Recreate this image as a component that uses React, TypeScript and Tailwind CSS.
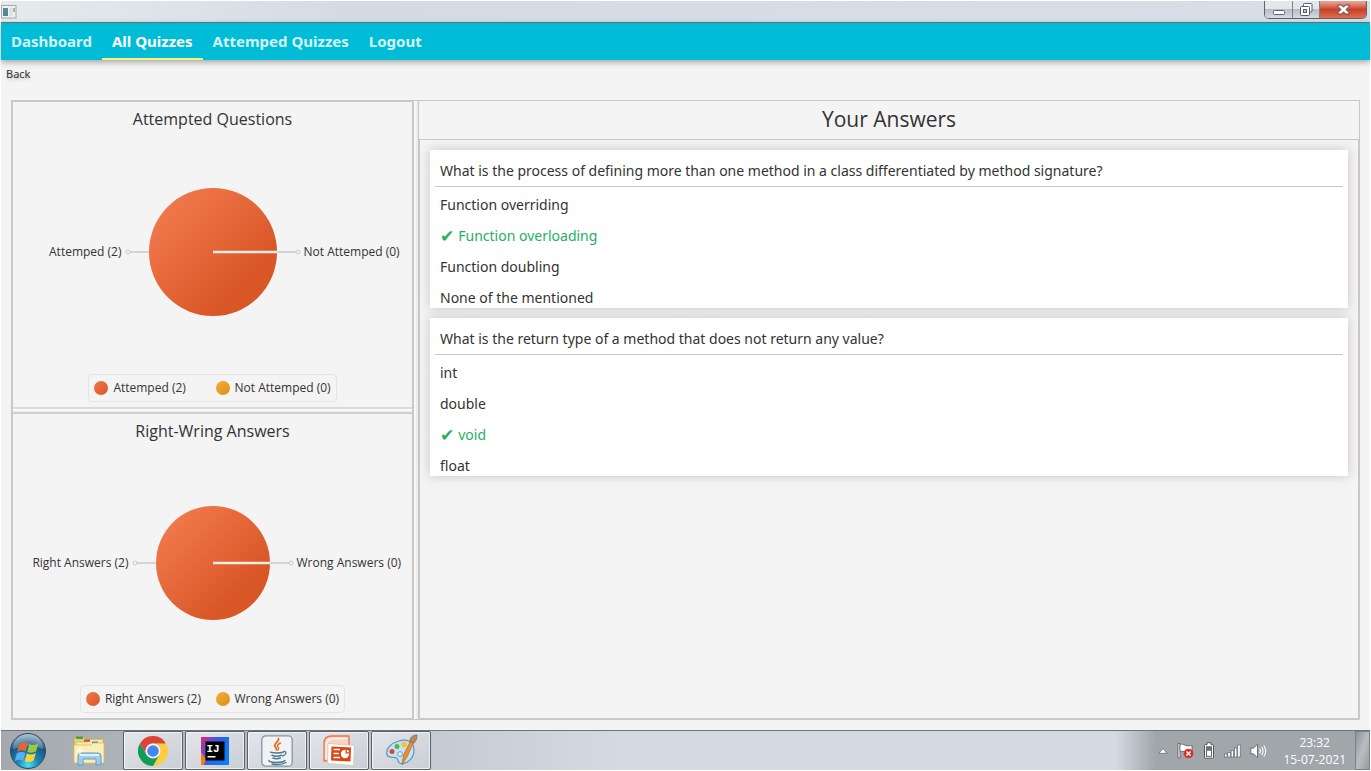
import React from "react";

type Slice = { label: string; value: number };
type Question = { text: string; options: string[]; correct: number };

const tabs = ["Dashboard", "All Quizzes", "Attemped Quizzes", "Logout"];

const questions: Question[] = [
  {
    text: "What is the process of defining more than one method in a class differentiated by method signature?",
    options: ["Function overriding", "Function overloading", "Function doubling", "None of the mentioned"],
    correct: 1,
  },
  {
    text: "What is the return type of a method that does not return any value?",
    options: ["int", "double", "void", "float"],
    correct: 2,
  },
];

function WindowBar() {
  return (
    <header className="flex h-[22px] items-start justify-between border-b border-[#70777c] bg-linear-to-r from-[#e5eaec] via-[#d5dbe4] via-25% to-[#d8dee6]">
      <svg className="mt-1 h-[14px] w-[16px]" viewBox="0 0 16 14" aria-hidden="true">
        <rect x="0.5" y="0.5" width="14.5" height="12.5" fill="#f0f1f1" stroke="#a4a8aa" />
        <rect x="2" y="3" width="5" height="8" fill="#4b8f8b" />
        <rect x="2" y="3" width="5" height="3" fill="#5d86a8" />
        <rect x="8.5" y="3" width="3" height="8" fill="#dcdedd" />
        <rect x="12" y="3" width="2" height="4" fill="#8dbcb9" />
      </svg>
      <div className="mr-[3px] flex h-[18px] overflow-hidden rounded-b-[5px] border border-t-0 border-[#5d646e]">
        <button aria-label="Minimize" className="flex w-[28px] items-center justify-center border-r border-[#7b818b] bg-linear-to-b from-[#e3e6ea] from-45% via-[#b8bdc6] via-50% to-[#d6dae0]">
          <svg className="h-[12px] w-[14px]" viewBox="0 0 14 12">
            <rect x="1.5" y="6.5" width="11" height="4" rx="1" fill="#fff" stroke="#5a6070" />
          </svg>
        </button>
        <button aria-label="Restore" className="flex w-[27px] items-center justify-center border-r border-[#7b818b] bg-linear-to-b from-[#e3e6ea] from-45% via-[#b8bdc6] via-50% to-[#d6dae0]">
          <svg className="h-[13px] w-[13px]" viewBox="0 0 13 13" stroke="#555b6b">
            <rect x="3.500" y="0.5" width="8.500" height="8.500" rx="1" fill="#fff" />
            <rect x="0.5" y="3.500" width="9" height="9" rx="1" fill="#fff" />
            <rect x="3.500" y="6.500" width="3" height="3" fill="#c5c9d1" />
          </svg>
        </button>
        <button aria-label="Close" className="flex w-[46px] items-center justify-center bg-linear-to-b from-[#e5a292] from-5% via-[#c8402a] via-50% to-[#de6e4d]">
          <svg className="h-[11px] w-[13px]" viewBox="0 0 13 11">
            <path d="M1 1h3.500l2 2.200L8.500 1H12v1.500L9 5.500l3 3V10H8.500l-2-2.200-2 2.200H1V8.500l3-3-3-3z" fill="#fff" stroke="#5b4650" />
          </svg>
        </button>
      </div>
    </header>
  );
}

function PieChart({ title, slices, radius }: { title: string; slices: [Slice, Slice]; radius: number }) {
  const width = radius * 2 + 48;
  const height = radius * 2 + 2;
  const cx = width / 2;
  const cy = height / 2;
  const id = "pie-" + radius;
  const caption = (s: Slice) => s.label + " (" + s.value + ")";
  return (
    <section className="flex flex-1 flex-col items-center pb-[5px]">
      <h2 className="pt-[6px] text-[16px] leading-[22px]">{title}</h2>
      <div className="grid w-full flex-1 grid-cols-[1fr_auto_1fr] items-center gap-[3px] text-[12px] leading-4 whitespace-nowrap">
        <span className="text-right">{caption(slices[0])}</span>
        <svg width={width} height={height} viewBox={`0 0 ${width} ${height}`} role="img" aria-label={title}>
          <defs>
            <linearGradient id={id} x1="0.1" y1="0.1" x2="0.75" y2="0.75">
              <stop offset="0" stopColor="#f27a4e" />
              <stop offset="1" stopColor="#d95626" />
            </linearGradient>
          </defs>
          <g stroke="#c9c9c9" fill="none">
            <circle cx="3" cy={cy} r="2" />
            <path d={`M5 ${cy}H${cx - radius}M${cx + radius} ${cy}H${width - 5}`} strokeWidth="1.5" />
            <circle cx={width - 3} cy={cy} r="2" />
          </g>
          <circle cx={cx} cy={cy} r={radius} fill={`url(#${id})`} />
          <path d={`M${cx} ${cy}h${radius}`} stroke="#f8ece6" strokeWidth="2.500" />
        </svg>
        <span>{caption(slices[1])}</span>
      </div>
      <ul className="grid grid-cols-2 gap-[6px] rounded-[4px] border border-[#e4e4e4] px-[5px] py-[5px] text-[12px] leading-4">
        {slices.map((s, i) => (
          <li key={s.label} className="flex items-center gap-[5px] whitespace-nowrap">
            <span
              className={
                i === 0
                  ? "size-[14px] rounded-full bg-linear-to-br from-[#f0784d] to-[#d95626]"
                  : "size-[14px] rounded-full bg-linear-to-br from-[#f3ae3a] to-[#dd8f10]"
              }
            />
            {caption(s)}
          </li>
        ))}
      </ul>
    </section>
  );
}

function QuestionCard({ question }: { question: Question }) {
  return (
    <article className="bg-white px-[5px] shadow-[0_0_10px_rgba(90,70,75,0.27)]">
      <h3 className="border-b border-[#c8c8c8] px-[5px] pt-[11px] pb-[5px] leading-5">{question.text}</h3>
      <ul className="flex flex-col gap-[11px] px-[5px] pt-2">
        {question.options.map((o, i) => (
          <li key={o} className={i === question.correct ? "flex gap-[4px] leading-5 text-[#27ae60]" : "leading-5"}>
            {i === question.correct && <span className="font-['DejaVu_Sans',sans-serif] text-[17px]">✔</span>}
            {o}
          </li>
        ))}
      </ul>
    </article>
  );
}

function StartOrb() {
  return (
    <svg className="size-[38px]" viewBox="0 0 38 38" aria-hidden="true">
      <defs>
        <radialGradient id="orb" cx="0.5" cy="0.9" r="0.85">
          <stop offset="0" stopColor="#4fe0f5" />
          <stop offset="0.35" stopColor="#1789b8" />
          <stop offset="0.75" stopColor="#1c527e" />
          <stop offset="1" stopColor="#7fa3bd" />
        </radialGradient>
      </defs>
      <circle cx="19" cy="19" r="17.500" fill="url(#orb)" stroke="#2d4a60" />
      <path d="M4 17a15 15 0 0 1 30 0c-9-5-20-3-30 0z" fill="#fff" opacity="0.28" />
      <g transform="translate(-1.500 -1.500) scale(1.120)">
        <path d="M10.500 12.500c2.500-2 5.500-2 7.500-.8l-1.800 6.800c-2.200-1.200-4.700-1.200-7.400.5z" fill="#ef6327" />
        <path d="M19.500 12.200c2.500 1.300 5.300 1.100 8-.7l-1.900 7c-2.600 1.600-5.400 1.700-7.900.5z" fill="#9bcb3c" />
        <path d="M8.300 20.500c2.600-1.700 5.200-1.700 7.500-.5l-1.900 6.900c-2.300-1.200-4.800-1.100-7.400.5z" fill="#57b0f0" />
        <path d="M17.300 20.500c2.500 1.300 5.300 1.100 8-.5l-1.900 6.800c-2.600 1.600-5.400 1.800-8 .6z" fill="#fbd233" />
      </g>
    </svg>
  );
}

function FolderIcon() {
  return (
    <svg className="h-[32px] w-[34px]" viewBox="0 0 34 32" aria-hidden="true">
      <path d="M2 4q0-2 2-2h8l2 2h16q1.500 0 1.500 2v21H2z" fill="#e9cf76" stroke="#c9a650" />
      <rect x="4" y="1.500" width="7" height="2.500" fill="#35a853" />
      <path d="M4 7h12l1.500-2.500H31V27H4z" fill="#f8e9a8" stroke="#d6b865" strokeWidth="0.7" />
      <rect x="12" y="4.500" width="6" height="2.200" fill="#dc4b3b" />
      <rect x="20" y="6.500" width="6" height="2" fill="#3c8bd9" />
      <path d="M2 10h17l2-2h11v20H2z" fill="#fbefb8" stroke="#d9bd6c" strokeWidth="0.8" />
      <path d="M6 30V21q0-3 3-3h17q3 0 3 3v9h-5v-6H11v6z" fill="#9fcdea" stroke="#5c9dc8" />
      <path d="M8 20h19" stroke="#dff1fb" strokeWidth="2" />
      <path d="M8 12v8M4 16h8" stroke="#fff" strokeWidth="1" />
    </svg>
  );
}

function ChromeIcon() {
  return (
    <svg className="size-[30px]" viewBox="0 0 48 48" aria-hidden="true">
      <path d="M44.800 12A24 24 0 0 1 24 48L34.400 30 24 12z" fill="#ffcd40" />
      <path d="M3.200 12A24 24 0 0 0 24 48l10.400-18H13.600z" fill="#0f9d58" />
      <path d="M3.200 12A24 24 0 0 1 44.800 12H24a12 12 0 0 0-10.400 18z" fill="#db4437" />
      <circle cx="24" cy="24" r="12" fill="#f4f4f4" />
      <circle cx="24" cy="24" r="9.300" fill="#4285f4" />
    </svg>
  );
}

function IdeaIcon() {
  return (
    <svg className="size-[28px]" viewBox="0 0 28 28" aria-hidden="true">
      <defs>
        <linearGradient id="idea" x1="0" y1="0" x2="1" y2="0.6">
          <stop offset="0" stopColor="#e3266f" />
          <stop offset="0.25" stopColor="#8a3fb8" />
          <stop offset="0.5" stopColor="#2f5fe6" />
          <stop offset="1" stopColor="#087cfa" />
        </linearGradient>
      </defs>
      <rect width="28" height="28" fill="url(#idea)" />
      <path d="M0 15l5 7-2 6H0z" fill="#f97a12" />
      <rect x="4.500" y="4.500" width="19" height="19" fill="#000" />
      <text x="5.500" y="14.500" fill="#fff" fontSize="11" fontWeight="700" fontFamily="Liberation Mono, monospace">IJ</text>
      <rect x="6.500" y="19" width="8" height="1.500" fill="#fff" />
    </svg>
  );
}

function JavaIcon() {
  return (
    <svg className="size-[32px]" viewBox="0 0 32 32" aria-hidden="true">
      <rect x="0.8" y="0.8" width="30.400" height="30.400" rx="4" fill="#f0f2f3" stroke="#7f97a8" strokeWidth="1.300" />
      <g fill="none" strokeLinecap="round">
        <path d="M17.500 3.500c1 3-5.500 5-3.500 8 .7 1.200 2 2 1.500 3.500" stroke="#e76f1e" strokeWidth="1.800" />
        <path d="M19.500 8c-3.500 1.500-3.500 3-2.200 4.500.8 1 .2 2-.6 2.500" stroke="#e76f1e" strokeWidth="1.400" />
        <path d="M9.500 17.200c2 1 10 1 12.500 0M11 20.200c2.500 1 7 1 9.500 0M12 23c2 .8 5.500.8 7.500 0" stroke="#4b7594" strokeWidth="1.500" />
        <path d="M22.500 16.500c3.500-.5 3 3.500-.8 4.500" stroke="#4b7594" strokeWidth="1.300" />
        <path d="M8 25.500c-1.500 2.500 14 2.800 16 0M11 29c5 .8 11 .5 14-1.500" stroke="#4b7594" strokeWidth="1.300" />
      </g>
    </svg>
  );
}

function SlidesIcon() {
  return (
    <svg className="size-[32px]" viewBox="0 0 32 32" aria-hidden="true">
      <path d="M1 26V8.500Q1 1 8.500 1H26v24z" fill="#f8d3c2" stroke="#e8754a" strokeWidth="1.300" />
      <path d="M3.500 24V10.500q0-7 7-7H24" fill="none" stroke="#fdf3ee" strokeWidth="1.500" />
      <path d="M5 8.500 31.500 10.500 30.500 30.500 4.500 28.500z" fill="#fdfdfc" stroke="#cfc5bd" strokeWidth="0.8" />
      <path d="M8.500 11.500 28 12.500 27.500 26.500 8 25.500z" fill="#de4312" />
      <path d="M10.500 14.500h6.500M10.500 18.500h5.500M10.500 22.500h6.500" stroke="#fff" strokeWidth="1.700" />
      <circle cx="22" cy="19" r="4.200" fill="#fff" />
      <path d="M22.500 18.500v-4.800a4.800 4.800 0 0 1 4.500 4.800z" fill="#de4312" />
      <path d="M23.800 17.300v-2.800a3 3 0 0 1 2.500 2.800z" fill="#fff" />
    </svg>
  );
}

function PaintIcon() {
  return (
    <svg className="size-[33px]" viewBox="0 0 33 33" aria-hidden="true">
      <path d="M14 7c8-2.500 15 1 15 9 0 8-6 14-13 13.500-4-.3-2-4-4.500-5.500C8.500 22.500 3 25 1.800 20 .6 14 7 9 14 7z" fill="#c3e2f3" stroke="#5a96bd" strokeWidth="1.200" />
      <circle cx="15" cy="20" r="2.300" fill="#f4f8fa" stroke="#5a96bd" />
      <circle cx="7" cy="17.500" r="2.500" fill="#e0413a" />
      <circle cx="12" cy="12.500" r="2.500" fill="#53b748" />
      <circle cx="19" cy="10.500" r="2.800" fill="#f5c32c" />
      <path d="M28.500 8 22.500 22l-5.500 9 1.500-10L26 6z" fill="#ef8e2c" stroke="#b9651b" strokeWidth="0.7" />
      <path d="M25 7.500C24.500 4 27 1 32 1c0 3-.5 6-3.500 8.500z" fill="#b08a62" stroke="#86633f" strokeWidth="0.7" />
    </svg>
  );
}

const apps = [
  { name: "Chrome", icon: <ChromeIcon /> },
  { name: "IntelliJ IDEA", icon: <IdeaIcon /> },
  { name: "Java", icon: <JavaIcon /> },
  { name: "PowerPoint", icon: <SlidesIcon /> },
  { name: "Paint", icon: <PaintIcon /> },
];

function Tray() {
  return (
    <div className="flex items-stretch bg-linear-to-r from-transparent to-[#a0a6aa] to-[40px] pl-[42px]">
      <div className="flex items-center gap-[9px]">
        <svg className="h-[6px] w-[10px]" viewBox="0 0 10 6" aria-hidden="true">
          <path d="M5 .5 9.200 5.300H.8z" fill="#fff" stroke="#6a7075" strokeWidth="0.8" />
        </svg>
        <svg className="h-[17px] w-[17px]" viewBox="0 0 17 17" aria-hidden="true">
          <path d="M1 1.500h2V16H1z" fill="#fff" stroke="#565c60" strokeWidth="0.8" />
          <path d="M3 2.500c3-1.500 4 1.500 6.500.5V3.800c2 .5 3-.3 5.500-.3v7c-2.500 0-4 .8-6 0V9.500C7 10 5 8.500 3 9.500z" fill="#fff" stroke="#565c60" strokeWidth="0.8" />
          <circle cx="11.500" cy="11.500" r="4.800" fill="#d9302c" />
          <path d="m9.500 9.500 4 4m0-4-4 4" stroke="#fff" strokeWidth="1.500" />
        </svg>
        <svg className="h-[17px] w-[12px]" viewBox="0 0 12 17" aria-hidden="true">
          <path d="M4 .7h4v2h1.500q1 0 1 1v11.500q0 1-1 1h-7q-1 0-1-1V3.700q0-1 1-1H4z" fill="#fff" stroke="#50565a" />
          <rect x="3.500" y="4.800" width="5" height="9.500" fill="#fff" stroke="#50565a" strokeWidth="0.9" />
          <rect x="3.500" y="4.800" width="5" height="4" fill="#6c7377" />
        </svg>
        <svg className="h-[14px] w-[17px]" viewBox="0 0 17 14" aria-hidden="true" fill="#fff" stroke="#62686c" strokeWidth="0.7">
          <rect x="0.5" y="10" width="2.500" height="3" />
          <rect x="3.800" y="8.500" width="2.500" height="4.500" />
          <rect x="7.100" y="6.500" width="2.500" height="6.500" />
          <rect x="10.400" y="4" width="2.500" height="9" />
          <rect x="13.700" y="1" width="2.500" height="12" />
        </svg>
        <svg className="h-[16px] w-[17px]" viewBox="0 0 17 16" aria-hidden="true">
          <path d="M.8 5.200h2.700L7.500 1.200v13.600l-4-4H.8z" fill="#fff" stroke="#565c60" strokeWidth="0.8" />
          <path d="M9.500 5.500q1.800 2.500 0 5M11.700 4q2.800 4 0 8M13.800 2.500q4 5.500 0 11" fill="none" stroke="#fff" strokeWidth="1.100" />
        </svg>
      </div>
      <div className="flex flex-col justify-center pr-[9px] pl-[16px] text-center text-[12px] leading-[17px] text-white">
        <time>23:32</time>
        <time>15-07-2021</time>
      </div>
      <button aria-label="Show desktop" className="w-[15px] border border-[#7c8388] bg-linear-to-br from-[#8e959a] via-[#b9bec2] to-[#949a9f]" />
    </div>
  );
}

function Taskbar() {
  return (
    <footer className="flex h-[40px] items-stretch justify-between border-t border-[#6c7379] bg-linear-to-r from-[#a3a9ae] via-[#d4d9e3] via-45% to-[#d4d9e3]">
      <div className="flex items-stretch">
        <button aria-label="Start" className="flex w-[54px] items-center justify-center">
          <StartOrb />
        </button>
        <button aria-label="Explorer" className="flex w-[68px] items-center justify-center">
          <FolderIcon />
        </button>
        <div className="flex gap-[2px]">
          {apps.map((a) => (
            <button
              key={a.name}
              aria-label={a.name}
              className="flex w-[60px] items-center justify-center rounded-[2px] border border-[#596067] bg-linear-to-br from-[#e3e6e9] to-[#c9ced5] shadow-[inset_0_0_0_1px_rgba(255,255,255,0.65)]"
            >
              {a.icon}
            </button>
          ))}
        </div>
      </div>
      <Tray />
    </footer>
  );
}

export default function App() {
  return (
    <div className="flex min-h-screen flex-col bg-white p-px font-['Open_Sans',sans-serif] text-[#333333]">
      <WindowBar />
      <div className="flex flex-1 flex-col bg-[#f4f4f4]">
        <nav className="z-10 flex h-[37px] bg-[#00bcd7] font-['Noto_Sans',sans-serif] text-[15px] font-bold shadow-[0_2px_6px_rgba(0,0,0,0.35)]">
          {tabs.map((t, i) => (
            <a
              key={t}
              href="#"
              className={
                i === 1
                  ? "flex items-center border-b-2 border-[#f4f77c] px-[10px] pt-[2px] text-white"
                  : "flex items-center border-b-2 border-transparent px-[10px] pt-[2px] text-[#d3f4f8]"
              }
            >
              {t}
            </a>
          ))}
        </nav>
        <div className="flex h-[40px] items-start px-[5px] pt-[6px]">
          <button className="font-['Noto_Sans',sans-serif] text-[11px] leading-4 text-shadow-[0_2px_3px_rgba(0,0,0,0.2)]">Back</button>
        </div>
        <main className="mx-[10px] mb-[10px] flex flex-1 border border-[#c8c8c8]">
          <div className="flex w-[402px] shrink-0 flex-col border border-r-2 border-[#c8c8c8]">
            <PieChart
              title="Attempted Questions"
              radius={64}
              slices={[
                { label: "Attemped", value: 2 },
                { label: "Not Attemped", value: 0 },
              ]}
            />
            <div className="h-[7px] border-t-2 border-b-2 border-t-[#dadada] border-b-[#cfcfcf] bg-linear-to-b from-white to-[#ececec]" />
            <PieChart
              title="Right-Wring Answers"
              radius={57}
              slices={[
                { label: "Right Answers", value: 2 },
                { label: "Wrong Answers", value: 0 },
              ]}
            />
          </div>
          <div className="w-[4px] shrink-0 bg-linear-to-r from-white to-[#e6e6e6]" />
          <section className="flex flex-1 flex-col border-l border-[#c8c8c8]">
            <h1 className="pt-[4px] pb-[6px] text-center text-[21px] leading-[28px]">Your Answers</h1>
            <div className="flex flex-1 flex-col gap-[10px] border border-[#c8c8c8] p-[10px] font-['Noto_Sans',sans-serif] text-[14px]">
              {questions.map((q) => (
                <QuestionCard key={q.text} question={q} />
              ))}
            </div>
          </section>
        </main>
      </div>
      <Taskbar />
    </div>
  );
}
